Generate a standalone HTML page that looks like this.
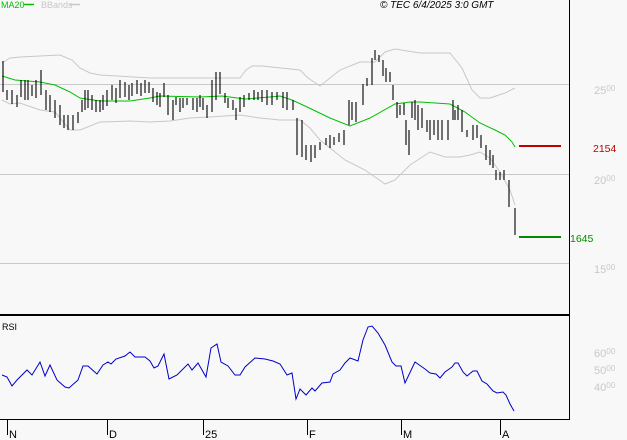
<!DOCTYPE html>
<html><head><meta charset="utf-8"><style>
html,body{margin:0;padding:0;background:#f8f8f8}
svg{display:block}
text{font-family:"Liberation Sans",sans-serif}
</style></head><body>
<svg width="627" height="440" viewBox="0 0 627 440" xmlns="http://www.w3.org/2000/svg">
<rect width="627" height="440" fill="#f8f8f8"/>
<text x="1" y="8" font-size="9" fill="#00c000">MA20</text>
<line x1="24" y1="4.5" x2="34" y2="4.5" stroke="#00c000" stroke-width="1.5"/>
<text x="41" y="8" font-size="9" fill="#c8c8c8">BBands</text>
<line x1="70" y1="4.5" x2="80" y2="4.5" stroke="#c8c8c8" stroke-width="1.5"/>
<text x="380" y="8" font-size="10" font-style="italic" fill="#000">© TEC 6/4/2025 3:0 GMT</text>
<g stroke="#c8c8c8" stroke-width="1">
<line x1="0" y1="84.5" x2="569" y2="84.5"/>
<line x1="0" y1="174.5" x2="569" y2="174.5"/>
<line x1="0" y1="263.5" x2="569" y2="263.5"/>
</g>
<polyline fill="none" stroke="#c8c8c8" stroke-width="1" points="2,63 10,58 20,57 60,55 72,60 80,68 90,73 100,75 150,78 200,78 240,78 246,70 252,66 262,66 300,70 308,78 320,86 340,70 360,62 375,62 385,52 395,49 420,53 450,53 462,68 472,90 480,98 490,98 505,93 515,88"/>
<polyline fill="none" stroke="#c8c8c8" stroke-width="1" points="2,100 10,104 20,103 40,110 55,112 70,130 80,130 100,122 130,121 150,122 170,121 190,118 210,117 240,115 260,118 280,120 300,120 310,128 320,140 345,160 365,170 385,184 395,180 410,165 430,152 445,157 460,157 470,155 480,152 490,158 500,172 510,190 515,205"/>
<polyline fill="none" stroke="#00c000" stroke-width="1" points="2,76 15,80 40,82 55,85 70,92 80,98 100,101 130,101 150,98 160,96 200,97 222,96 245,99 270,97 280,96 292,100 305,106 330,118 350,126 370,118 395,104 410,102 420,102 450,104 465,112 480,123 495,130 505,135 512,142 515,147"/>
<path fill="none" stroke="#000" stroke-width="1.1" d="M3 61V92M7 90V100M12 90V104M17 95V107M21 80V97M25 80V100M28 80V100M32 85V96M36 80V98M41 70V95M46 90V110M50 95V112M55 100V118M60 105V125M64 115V128M68 115V130M73 115V130M78 112V123M82 100V112M85 90V110M88 90V108M92 95V110M96 100V112M100 100V112M103 95V110M107 90V106M112 85V100M116 88V103M120 80V98M125 82V97M129 85V100M132 83V96M137 80V94M141 83V96M145 80V93M149 82V93M153 88V102M157 92V105M160 93V107M164 83V97M168 95V115M173 100V120M176 97V105M180 98V112M183 98V108M187 98V105M193 98V110M197 98V112M200 95V107M203 98V110M207 105V118M212 80V112M216 72V100M220 72V94M225 93V103M228 98V108M233 100V110M236 108V120M240 97V112M244 95V107M249 93V100M254 90V100M258 92V100M262 90V102M267 90V105M272 92V105M277 92V100M283 92V108M287 92V110M293 100V110M297 118V155M302 120V157M306 145V160M311 145V162M315 145V158M320 142V150M326 138V145M330 135V148M334 137V145M339 133V142M344 130V145M349 100V125M352 102V120M356 102V122M363 84V105M367 78V86M372 58V85M375 50V60M379 55V62M383 60V76M386 68V82M390 72V82M393 85V100M397 102V118M400 105V115M404 103V115M406 120V145M409 130V155M412 102V118M415 100V120M418 105V130M422 108V128M427 120V132M430 120V140M434 120V135M438 120V140M442 120V140M448 120V140M453 100V120M455 110V120M458 105V120M462 110V132M467 130V137M473 125V140M477 125V138M481 135V148M486 145V160M490 150V165M493 155V168M496 170V180M500 172V180M504 170V180M509 180V207M515 208V235"/>
<line x1="519" y1="146" x2="561" y2="146" stroke="#c00000" stroke-width="2"/>
<line x1="519" y1="237" x2="561" y2="237" stroke="#008c00" stroke-width="2"/>
<text x="593" y="152" font-size="10.5" fill="#c00000">2154</text>
<text x="570" y="242" font-size="10.5" fill="#008c00">1645</text>
<g fill="#c8c8c8">
<text x="594" y="94" font-size="11">25<tspan font-size="8" dy="-3">00</tspan></text>
<text x="594" y="184" font-size="11">20<tspan font-size="8" dy="-3">00</tspan></text>
<text x="594" y="273" font-size="11">15<tspan font-size="8" dy="-3">00</tspan></text>
<text x="594" y="357" font-size="11">60<tspan font-size="8" dy="-3">00</tspan></text>
<text x="594" y="374" font-size="11">50<tspan font-size="8" dy="-3">00</tspan></text>
<text x="594" y="391" font-size="11">40<tspan font-size="8" dy="-3">00</tspan></text>
</g>
<line x1="569.5" y1="0" x2="569.5" y2="420" stroke="#000" stroke-width="1"/>
<line x1="0" y1="315" x2="570" y2="315" stroke="#000" stroke-width="2"/>
<line x1="0" y1="419.5" x2="570" y2="419.5" stroke="#000" stroke-width="1"/>
<text x="2" y="330" font-size="9" fill="#000">RSI</text>
<polyline fill="none" stroke="#0000c8" stroke-width="1" points="2,375 7,377 12,386 17,380 27,370 32,375 40,362 45,376 50,365 57,380 65,387 69,388 78,380 83,366 88,366 97,374 103,365 108,362 111,364 116,359 125,356 130,352 135,357 145,357 150,361 154,368 158,366 164,354 169,379 177,375 188,364 192,370 198,363 206,377 211,348 217,344 221,362 228,366 235,375 240,375 245,367 255,358 265,359 273,361 280,364 287,375 292,373 296,399 300,389 306,395 312,388 315,391 322,383 330,382 333,374 340,370 345,363 350,358 358,361 363,340 368,327 372,326 378,333 385,345 392,362 396,366 401,366 405,383 415,362 425,369 430,373 436,374 440,378 445,372 452,367 455,363 458,363 463,372 467,376 473,371 477,371 482,381 487,384 493,391 497,393 503,392 506,395 510,404 514,411"/>
<g stroke="#000" stroke-width="1">
<line x1="7.5" y1="420" x2="7.5" y2="435"/>
<line x1="107.5" y1="420" x2="107.5" y2="435"/>
<line x1="203.5" y1="420" x2="203.5" y2="435"/>
<line x1="307.5" y1="420" x2="307.5" y2="435"/>
<line x1="401.5" y1="420" x2="401.5" y2="435"/>
<line x1="500.5" y1="420" x2="500.5" y2="435"/>
</g>
<g font-size="11" fill="#000">
<text x="9" y="438">N</text>
<text x="109" y="438">D</text>
<text x="205" y="438">25</text>
<text x="309" y="438">F</text>
<text x="403" y="438">M</text>
<text x="502" y="438">A</text>
</g>
</svg>
</body></html>
